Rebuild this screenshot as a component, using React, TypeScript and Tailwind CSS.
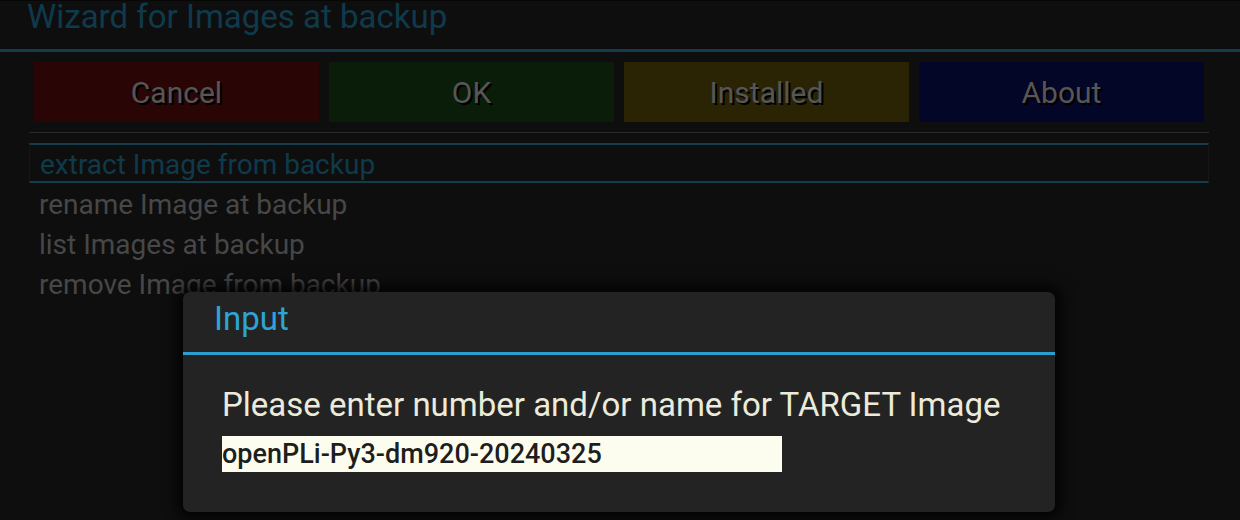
import React from "react";

const buttons = [
  { label: "Cancel", bg: "bg-[#2a0505]" },
  { label: "OK", bg: "bg-[#091d09]" },
  { label: "Installed", bg: "bg-[#2a2404]" },
  { label: "About", bg: "bg-[#040628]" },
];

const items = ["rename Image at backup", "list Images at backup", "remove Image from backup"];

const App = () => {
  return (
    <div className="relative w-[1240px] h-[520px] overflow-hidden bg-[#0e0e0e] font-['Roboto',sans-serif] border-t border-[#070707]">
      {/* screen title */}
      <div className="h-[48px] pl-[27px] text-[33px] leading-[31px] text-[#0f3a4c]">
        Wizard for Images at backup
      </div>
      <div className="h-[3px] bg-[#133c4c]" />

      {/* color buttons */}
      <div className="flex gap-[10px] pl-[34px] pt-[10px]">
        {buttons.map((b) => (
          <div
            key={b.label}
            className={`w-[285px] h-[60px] flex items-center justify-center text-[30px] text-[#565656] [text-shadow:2px_2px_0_#000] ${b.bg}`}
          >
            {b.label}
          </div>
        ))}
      </div>

      {/* menu list */}
      <div className="ml-[29px] w-[1180px] mt-[10px]">
        <div className="h-px bg-[#2b2b2b]" />
        <div className="mt-[10px] h-[40px] border-y-2 border-[#133c4c] border-x border-x-[#161616] flex items-center pl-[10px] pt-[4px] text-[28px] text-[#0f3a4c]">
          extract Image from backup
        </div>
        {items.map((t) => (
          <div key={t} className="h-[40px] flex items-center pl-[10px] pt-[4px] text-[28px] text-[#474747]">
            {t}
          </div>
        ))}
      </div>

      {/* input dialog */}
      <div className="absolute left-[183px] top-[291px] w-[872px] h-[220px] rounded-[7px] bg-[#232323] shadow-[0_0_14px_6px_rgba(0,0,0,0.85)] overflow-hidden">
        <div className="h-[60px] pl-[31px] pb-[7px] flex items-center text-[33px] text-[#2ea3d6]">Input</div>
        <div className="h-[3px] bg-[#2a9fd0]" />
        <div className="pl-[39px] pt-[30px]">
          <div className="text-[33px] leading-[40px] text-[#ecebdb]">
            Please enter number and/or name for TARGET Image
          </div>
          <div className="mt-[11px] w-[560px] h-[36px] bg-[#fdfdef] flex items-center text-[27px] text-[#1e1e1e] font-medium">
            openPLi-Py3-dm920-20240325
          </div>
        </div>
      </div>
    </div>
  );
};

export default App;
